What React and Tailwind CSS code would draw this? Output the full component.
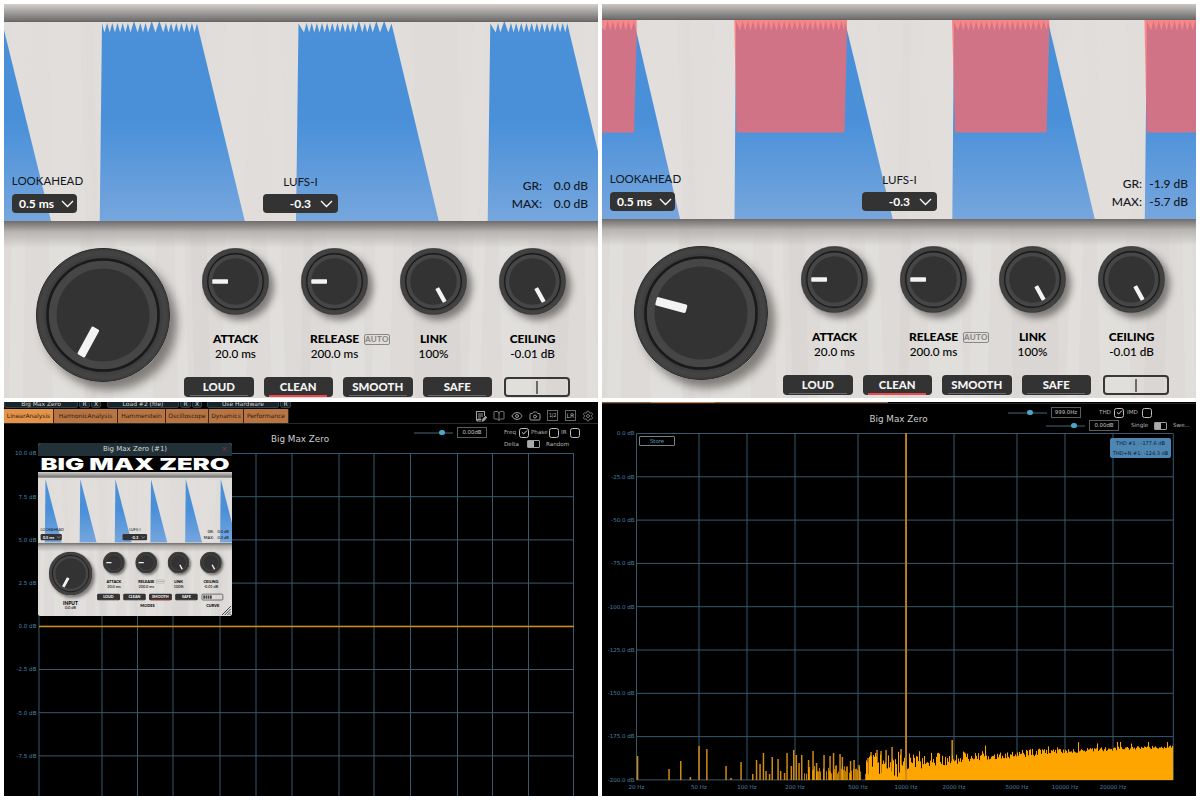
import React from 'react';
import { BookOpen, Eye, Camera, Settings, Check } from 'lucide-react';

// faint wood streaks, [x top, x bottom, width]
const STREAKS = [
  [8, 4, 14], [44, 50, 38], [76, 82, 12], [112, 108, 40], [170, 176, 10], [186, 192, 16],
  [222, 214, 26], [262, 270, 14], [300, 296, 9], [322, 330, 34], [372, 366, 18], [408, 412, 46],
  [470, 462, 12], [494, 500, 30], [548, 540, 20], [580, 584, 10],
];

// x positions of the notches cut in the top of each loud block
const run = (from, count, step = 5.2) => Array.from({ length: count }, (_, i) => from + i * step);

const LOUD_BLOCKS = [
  { left: 98, base: 95.7, right: 193, end: 241, notches: [...run(100.5, 6), 133.6, 139, 144, 151.4, ...run(159.3, 7)] },
  { left: 294.5, base: 292, right: 387.5, end: 435, notches: [...run(300, 11, 5.15), 358.3, 363.3, 368.7, 376, 384.3] },
  { left: 486.3, base: 483.7, right: 563.3, end: 611, notches: [491.7, 496.3, ...run(504.4, 12, 5.17)] },
];

const HOT_BLOCKS = [
  { left: -5, base: -5, right: 32, end: 78.3, notches: run(3, 6) },
  { left: 134, base: 132.5, right: 243, end: 291, notches: run(138, 21) },
  { left: 352, base: 350.3, right: 446, end: 493, notches: run(356, 18) },
  { left: 545, base: 542.8, right: 640, end: 690, notches: run(549, 10) },
];

const REDUCTION = [
  'M0 0H34.7V18L32 112.5H0Z',
  'M132.3 0H245V12L242.5 112.5H134.5Z',
  'M350 0H447.3V12L444.5 112.5H353Z',
  'M542.5 0H594V112.5H544.7Z',
];

const SPIKES = [23, 129.5, 237, 346, 452.5, 559.5];

const MODES = ['LOUD', 'CLEAN', 'SMOOTH', 'SAFE'];

function blockPath({ left, base, right, end, notches }) {
  let d = `M${base} 200L${left} 1.5`;
  notches.forEach((x, i) => {
    const next = i < notches.length - 1 ? notches[i + 1] : null;
    d += `L${x} 10.5`;
    if (next) d += `L${(x + next) / 2} ${next - x > 6 ? -1 : 1}`;
  });
  return `${d}L${right} 1.5L${end} 200Z`;
}

function Streaks({ height, opacity }) {
  return (
    <svg viewBox={`0 0 594 ${height}`} preserveAspectRatio="none" className="absolute inset-0 w-full h-full">
      {STREAKS.map(([a, b, w], i) => (
        <path
          key={i}
          d={`M${a} 0H${a + w}L${b + w} ${height}H${b}Z`}
          fill={i % 3 === 2 ? '#d5d0cd' : '#e8e6e2'}
          opacity={opacity}
        />
      ))}
    </svg>
  );
}

function Wave({ id, kind }) {
  return (
    <svg viewBox="0 0 594 199" className="absolute left-0 top-0 w-[594px] h-[199px]">
      <defs>
        <linearGradient id={id} x1="0" y1="0" x2="0" y2="199" gradientUnits="userSpaceOnUse">
          <stop offset="0" stopColor="#4a90d9" />
          <stop offset="0.5" stopColor="#4a90d9" />
          <stop offset="1" stopColor="#76a6dd" />
        </linearGradient>
      </defs>
      <g fill={`url(#${id})`}>
        {kind === 'loud' && <path d="M0 8L47 199H0Z" />}
        {kind === 'loud' && LOUD_BLOCKS.map((b) => <path key={b.left} d={blockPath(b)} />)}
        {kind === 'hot' && HOT_BLOCKS.map((b) => <path key={b.left} d={blockPath(b)} />)}
        {kind === 'idle' && SPIKES.map((x) => <path key={x} d={`M${x} 4L${x - 2} 199H${x + 50}Z`} />)}
      </g>
      {kind === 'hot' && <path d={REDUCTION.join('')} fill="#ff696a" fillOpacity="0.74" />}
    </svg>
  );
}

function Knob({ big, angle }) {
  return (
    <div
      className={
        big
          ? 'w-[134px] h-[134px] rounded-full shadow-[7px_8px_10px_rgba(50,45,42,0.55)]'
          : 'w-[67px] h-[67px] rounded-full shadow-[5px_5px_7px_rgba(50,45,42,0.55)]'
      }
    >
      <svg viewBox="0 0 134 134" className="block w-full h-full">
        <circle cx="67" cy="67" r="66.5" fill="#3e3e3e" stroke="#2b2b2b" />
        <circle cx="67" cy="67" r="62" fill="none" stroke="#434343" strokeWidth="5" />
        <circle cx="67" cy="67" r="55.5" fill="#464646" stroke="#1a1a1a" strokeWidth="2.6" />
        <circle cx="67" cy="67" r="46.5" fill="#333" />
        <rect x="62.7" y="82" width="8.6" height="31.5" rx="1.5" fill="#f3f3f3" transform={`rotate(${angle} 67 67)`} />
      </svg>
    </div>
  );
}

function Dial({ label, value, angle, auto }) {
  return (
    <div className="w-[99px] flex flex-col items-center text-black">
      <Knob angle={angle} />
      <div className="relative mt-[17px] text-[12px] leading-[14px] font-black tracking-[-0.1px] whitespace-nowrap">
        {label}
        {auto && (
          <span className="absolute left-[54px] top-[1.5px] h-[11px] w-[26px] rounded-[2px] border border-[#8b8987] text-center text-[8px] leading-[9px] font-black tracking-[0.3px] text-[#8b8987]">
            AUTO
          </span>
        )}
      </div>
      <div className="text-[11.7px] leading-[14px] font-medium whitespace-nowrap">{value}</div>
    </div>
  );
}

function Picker({ label, value, wide }) {
  return (
    <div className="flex flex-col items-center">
      <span className={wide ? 'mb-[5px] text-[11.6px] leading-[15px]' : 'mb-[6px] text-[11.5px] leading-[15px]'}>
        {label}
      </span>
      <div
        className={
          wide
            ? 'flex h-[19px] w-[75px] items-center justify-end rounded-[4px] bg-[#333] pr-[5px] text-[12px] font-bold text-white'
            : 'flex h-[19px] w-[65px] self-start items-center justify-end rounded-[4px] bg-[#333] pr-[3px] text-[12px] font-bold text-white'
        }
      >
        {value}
        <svg viewBox="0 0 13 8" className={wide ? 'ml-[9px] w-[13px] h-[8px]' : 'ml-[7px] w-[13px] h-[8px]'}>
          <path d="M1 1L6.5 6.5L12 1" fill="none" stroke="#fff" strokeWidth="1.3" />
        </svg>
      </div>
    </div>
  );
}

function Limiter({ id, kind, gr, max, inputAngle, mode, short, mini }) {
  return (
    <div className="relative w-[594px] h-[441px] flex flex-col bg-[#dddad7] font-['Lato',sans-serif]">
      <div
        className={
          short
            ? 'h-[16px] shrink-0 bg-gradient-to-b from-[#cac7c3] to-[#706e6d] border-b border-[#686665]'
            : 'h-[18px] shrink-0 bg-gradient-to-b from-[#d3d0cc] to-[#706e6d] border-b border-[#686665]'
        }
      />
      <div className="relative h-[199px] shrink-0 overflow-hidden bg-[#e0ddda]">
        <Streaks height={199} opacity={0.15} />
        <Wave id={id} kind={kind} />
        <div className="relative flex h-full items-end pb-[8px] pl-[8px] text-[#10161d]">
          <div className="w-[71px]">
            <Picker label="LOOKAHEAD" value="0.5 ms" />
          </div>
          <div className={short ? 'ml-[181px]' : 'ml-[180px]'}>
            <Picker label="LUFS-I" value="-0.3" wide />
          </div>
          <div
            className={
              short
                ? 'ml-auto mr-[8px] grid grid-cols-[auto_46px] text-right text-[12px] leading-[18px] font-medium'
                : 'ml-auto mr-[10px] grid grid-cols-[auto_46px] text-right text-[12px] leading-[18px] font-medium'
            }
          >
            <span>GR:</span>
            <span>{gr}</span>
            <span>MAX:</span>
            <span>{max}</span>
          </div>
        </div>
      </div>
      <div className="relative flex-1 overflow-hidden">
        <Streaks height={224} opacity={0.4} />
        <div className="relative h-[27px] bg-gradient-to-b from-[#6f6c6b] via-[#aaa7a4]/75 via-40% to-transparent" />
        <div className={mini || short ? 'relative flex pl-px' : 'relative flex'}>
          <div className={short ? 'w-[182px] flex flex-col pl-[31px]' : 'w-[182px] flex flex-col pl-[31.5px]'}>
            <Knob big angle={inputAngle} />
            <div className="w-[134px] pt-[15px] text-center text-black">
              <div className="text-[15px] leading-[17px] font-black">INPUT</div>
              <div className="text-[12px] leading-[14px] font-medium">0.0 dB</div>
            </div>
          </div>
          <div className="flex flex-col">
            <div className="flex">
              <Dial label="ATTACK" value="20.0 ms" angle={90} />
              <Dial label="RELEASE" value="200.0 ms" angle={90} auto />
              <Dial label="LINK" value="100%" angle={-29} />
              <Dial label="CEILING" value="-0.01 dB" angle={-29} />
            </div>
            <div className="-ml-[2px] mt-[17px] flex gap-[10px]">
              {MODES.map((m) => (
                <div key={m} className="flex h-[20px] w-[69.5px] flex-col items-center rounded-[4px] bg-[#333] pt-[2px]">
                  <span className="text-[11.4px] leading-[16px] font-black tracking-[0px] text-[#f4f4f4]">{m}</span>
                  <span className={m === mode ? 'h-[1.5px] w-[58px] bg-[#f0484c]' : 'h-px w-[58px] bg-[#6a6a6a]'} />
                </div>
              ))}
              <div className="ml-[2px] flex h-[20px] w-[66px] items-center justify-center rounded-[4px] border-2 border-[#383838]">
                {mini ? (
                  <div className="mr-auto ml-[3px] h-[10px] w-[26px] bg-[repeating-linear-gradient(90deg,#444_0px,#444_5px,#999_5px,#999_7px)]" />
                ) : (
                  <div className="h-[13px] w-[2px] bg-[#6c6a69]" />
                )}
              </div>
            </div>
            <div className="mt-[8px] flex text-[12px] leading-[16px] font-black text-black">
              <span className="w-[304px] text-center">MODES</span>
              <span className="w-[96px] text-center">CURVE</span>
            </div>
          </div>
        </div>
      </div>
    </div>
  );
}

function Box({ on }) {
  return (
    <span className="flex h-[10px] w-[10px] shrink-0 items-center justify-center rounded-[2.5px] border border-[#c0c0c0]">
      {on && <Check className="h-[7px] w-[7px] text-white" strokeWidth={3} />}
    </span>
  );
}

function Toggle() {
  return (
    <span className="flex h-[8px] w-[13px] shrink-0 rounded-[1px] border border-[#9a9a9a]">
      <span className="h-full w-[6px] bg-[#aaa]" />
    </span>
  );
}

function Slider({ at, value }) {
  return (
    <div className="flex items-center">
      <div className="flex h-[2px] w-[39px] items-center bg-[#24323a]">
        <span className="h-[5.5px] w-[5.5px] rounded-full bg-[#48a9cc]" style={{ marginLeft: at }} />
      </div>
      <span className="ml-[4px] h-[11px] w-[30px] border border-[#5c5c5c] text-center text-[5.4px] leading-[9px] text-[#c4c4c4]">{value}</span>
    </div>
  );
}

const TABS = [
  ['LinearAnalysis', 'w-[50px] bg-[#e4934a]'],
  ['HarmonicAnalysis', 'w-[64px] bg-[#b87544]'],
  ['Hammerstein', 'w-[48px] bg-[#b87544]'],
  ['Oscilloscope', 'w-[43px] bg-[#b87544]'],
  ['Dynamics', 'w-[35px] bg-[#b87544]'],
  ['Performance', 'w-[45px] bg-[#b87544]'],
];

const SLOTS = [
  ['Big Max Zero', 'w-[74px]'], ['R', 'w-[11px]'], ['X', 'w-[10px] mr-[5px]'],
  ['Load #2 (file)', 'w-[72px]'], ['R', 'w-[11px]'], ['X', 'w-[10px] mr-[4px]'],
  ['Use Hardware', 'w-[72px]'], ['R', 'w-[11px]'],
];

function GainChart() {
  const cols = [35, 98, 133.5, 169, 216, 252, 288, 335, 370, 406.5, 453.5, 488.5, 524.5, 569.5];
  const rows = ['10.0 dB', '7.5 dB', '5.0 dB', '2.5 dB', '0.0 dB', '-2.5 dB', '-5.0 dB', '-7.5 dB'];
  return (
    <svg viewBox="0 0 594 347" className="block w-[594px] h-[347px]">
      <g stroke="#38596f" strokeWidth="1">
        {cols.map((x) => <path key={x} d={`M${x} 4.5V347`} />)}
        {rows.map((r, i) => <path key={r} d={`M35 ${4.5 + i * 43.2}H570`} />)}
      </g>
      <path d="M35 177.5H570" stroke="#cf8a17" strokeWidth="1.6" />
      <g fill="#4a80a6" fontSize="5.6" textAnchor="end">
        {rows.map((r, i) => <text key={r} x="32.5" y={6.4 + i * 43.2}>{r}</text>)}
      </g>
    </svg>
  );
}

function LinearPanel() {
  return (
    <div className="relative h-[394px] w-[594px] overflow-hidden bg-black">
      <div className="flex h-[6px] items-end gap-px overflow-hidden">
        {SLOTS.map(([t, w], i) => (
          <span key={i} className={`${w} h-[9px] shrink-0 rounded-[2px] border border-[#31424b] bg-[#18242a] text-center text-[6px] leading-[7px] text-[#d5d5d5]`}>
            {t}
          </span>
        ))}
      </div>
      <div className="flex h-[16px] items-end border-b border-[#2a2a2a]">
        {TABS.map(([t, c]) => (
          <span key={t} className={`${c} h-[14px] shrink-0 border-r border-[#3b2615] text-center text-[6px] leading-[14px] text-[#2d1808]`}>{t}</span>
        ))}
        <div className="ml-auto mr-[4px] flex h-full items-center gap-[6px] text-[#a0a0a0]">
          <svg viewBox="0 0 24 24" className="h-[12px] w-[12px]" fill="none" stroke="currentColor" strokeWidth="2.2" strokeLinecap="round">
            <path d="M19 11V3H3V19A3 3 0 0 0 6 22H12M7 8H15M7 12H15M7 16H11M5 22V19H12" />
            <path d="M15 22L16 18L21 13L23 15L18.5 20.5Z" fill="currentColor" />
          </svg>
          <BookOpen className="h-[12px] w-[12px] text-[#777]" />
          <Eye className="h-[12px] w-[12px]" />
          <Camera className="h-[12px] w-[12px]" />
          <span className="h-[11px] w-[11px] border border-[#666] text-center text-[5px] leading-[9px] tracking-[-0.4px] whitespace-nowrap text-[#bbb]">1|2</span>
          <span className="ml-px h-[11px] w-[11px] border border-[#666] text-center text-[6.3px] leading-[9px] text-[#bbb]">LR</span>
          <Settings className="h-[12px] w-[12px] text-[#777]" />
        </div>
      </div>
      <div className="flex h-[25px]">
        <div className="w-[410px] pl-[187px] pt-[9px] text-[8.8px] leading-[12px] text-center pr-[5px] text-[#cfcfcf]">Big Max Zero</div>
        <div className="pt-[3px]"><Slider at={25} value="0.00dB" /></div>
        <div className="ml-[17px] pt-[3px] text-[5.6px] text-[#b5b5b5]">
          <div className="flex h-[11px] items-center whitespace-nowrap">
            <span className="w-[15px]">Freq</span><Box on />
            <span className="ml-[2px] w-[18px]">Phase</span><Box />
            <span className="ml-[2px] w-[9px]">IR</span><Box />
          </div>
          <div className="flex h-[12px] items-center">
            <span className="w-[23px]">Delta</span><Toggle /><span className="ml-[6px]">Random</span>
          </div>
        </div>
      </div>
      <GainChart />

      {/* floating plugin window */}
      <div className="absolute left-[34px] top-[41px] h-[173px] w-[194px] overflow-hidden rounded-[3px] bg-[#dddad7]">
        <div className="relative h-[13px] bg-[#223138] text-center text-[7px] leading-[13px] text-[#d4d7d9]">
          Big Max Zero (#1)
          <span className="absolute right-[5px] top-0 text-[7px] text-[#a32a33]">×</span>
        </div>
        <div className="h-[16px] bg-black">
          <svg viewBox="0 0 194 16" className="block h-[16px] w-[194px]">
            <text x="2.5" y="14" textLength="189" lengthAdjust="spacingAndGlyphs" fontFamily="Inter" fontWeight="900" fontSize="16.5" fill="#fff">BIG MAX ZERO</text>
          </svg>
        </div>
        <div className="h-[144px] overflow-hidden">
          <div className="origin-top-left scale-[0.3266]">
            <Limiter id="idle-fill" kind="idle" gr="0.0 dB" max="0.0 dB" inputAngle={29} mode="SMOOTH" mini />
          </div>
        </div>
        <svg viewBox="0 0 10 10" className="absolute bottom-[1px] right-[1px] h-[9px] w-[9px]">
          <path d="M0 10L10 0M3 10L10 3M6 10L10 6M8.5 10L10 8.5" stroke="#333" strokeWidth="1" />
        </svg>
      </div>
    </div>
  );
}

// noise floor, [x, height] from 20 Hz upwards
const SPARSE = [
  [35.5, 24], [67, 11], [78.7, 19], [88.3, 3], [97, 34], [104.8, 31], [124, 14], [129, 2], [139, 18],
  [150.7, 6], [154.5, 20], [158, 16], [161.4, 27], [164, 9], [167.5, 6], [170.2, 23], [176, 21],
  [178.6, 9], [182.5, 7], [185, 27], [189.3, 14], [191.7, 30], [194.3, 25], [197, 17], [199.7, 25],
  [206.5, 20], [211, 29], [214.5, 17], [222, 25], [228, 24], [231.5, 27], [238, 26], [240.3, 23],
  [248.5, 19], [252, 20], [257, 15], [266, 22], [269, 28], [275, 30], [279, 29], [284, 30], [290, 33], [299, 31],
];

function noise(i) {
  const v = Math.sin(i * 127.1 + 3.7) * 43758.5453;
  return v - Math.floor(v);
}

// low region is patchy, towards 1 kHz the bars merge into a solid floor
function noiseBars() {
  const bars = [];
  for (let x = 200; x < 571; x += 1) {
    const n = noise(x);
    let h;
    if (x < 264) {
      h = x > 218 && x < 221 ? 0 : n < 0.25 ? 0 : 3 + n * 12;
    } else {
      const t = (x - 264) / 307;
      const spread = 22 * Math.pow(1 - t, 2) + 3.5;
      const top = 28 + t * 7;
      h = top - spread * (0.1 + n * 0.9);
      if (noise(x + 900) > 0.92) h = Math.min(h + 6, 38);
      if (x < 320 && noise(x + 400) < 0.15) h *= 0.4;
    }
    if (h > 0) bars.push([x, h]);
  }
  return bars;
}

const FLOOR = noiseBars();

function SpectrumChart() {
  const cols = [
    [34.5, '20 Hz'], [97, '50 Hz'], [145, '100 Hz'], [193, '200 Hz'], [256, '500 Hz'], [304, '1000 Hz'],
    [352, '2000 Hz'], [415, '5000 Hz'], [463, '10000 Hz'], [511, '20000 Hz'], [571.3, ''],
  ];
  const rows = ['0.0 dB', '-25.0 dB', '-50.0 dB', '-75.0 dB', '-100.0 dB', '-125.0 dB', '-150.0 dB', '-175.0 dB', '-200.0 dB'];
  return (
    <svg viewBox="0 0 594 365" className="block h-[365px] w-[594px]">
      <g stroke="#38596f">
        {cols.map(([x]) => <path key={x} d={`M${x} 2.5V349`} />)}
        {rows.map((r, i) => <path key={r} d={`M34.5 ${2.5 + i * 43.3}H571`} />)}
      </g>
      <g fill="#d08a14">
        {SPARSE.map(([x, h]) => <rect key={x} x={x - 0.7} y={349 - h} width="1.5" height={h} />)}
      </g>
      <g fill="#ffa500">
        {FLOOR.map(([x, h]) => (
          <rect key={x} x={x} y={349 - h} width="1.05" height={h} fillOpacity={x < 264 ? 0.75 : 1} />
        ))}
        <rect x="349.5" y="309" width="1.3" height="40" />
      </g>
      <rect x="303.2" y="2" width="1.7" height="347" fill="#d08a1c" />
      <g fill="#4a80a6" fontSize="5.5">
        {rows.map((r, i) => <text key={r} x="32.5" y={4.3 + i * 43.3} textAnchor="end">{r}</text>)}
        {cols.map(([x, t]) => <text key={x} x={x} y="357.5" textAnchor="middle">{t}</text>)}
      </g>
    </svg>
  );
}

function HarmonicPanel() {
  return (
    <div className="relative h-[394px] w-[594px] overflow-hidden bg-black">
      <div className="flex h-[2px] border-b border-[#222]">
        <span className="w-[49px] bg-[#8f5c36]" />
        <span className="w-[64px] bg-[#c9803c]" />
        <span className="w-[173px] bg-[#8f5c36]" />
      </div>
      <div className="flex h-[27px]">
        <div className="w-[406px] pl-[187px] pt-[9px] text-center text-[8.8px] leading-[12px] text-[#cfcfcf]">Big Max Zero</div>
        <div className="flex-1 pt-[2px] text-[5.6px] text-[#b5b5b5]">
          <div className="flex h-[13px] items-center">
            <Slider at={19} value="999.0Hz" />
            <span className="ml-[18px] w-[15px]">THD</span><Box on />
            <span className="ml-[3px] w-[15px]">IMD</span><Box />
          </div>
          <div className="flex h-[13px] items-center pl-[38px]">
            <Slider at={25} value="0.00dB" />
            <span className="ml-[12px] w-[23px]">Single</span><Toggle /><span className="ml-[6px]">Swe...</span>
          </div>
        </div>
      </div>
      <SpectrumChart />
      <div className="absolute left-[37px] top-[34px] h-[10px] w-[36px] rounded-[1px] border border-[#7d7d7d] bg-black text-center text-[5.4px] leading-[8px] text-[#5c9cc4]">
        Store
      </div>
      <div className="absolute left-[508px] top-[36px] h-[20px] w-[61px] rounded-[2px] bg-[#4e86b3] pt-[1px] text-center text-[5px] leading-[9.5px] whitespace-nowrap text-[#0b1c2c]">
        <div>THD #1 : -177.6 dB</div>
        <div>THD+N #1: -124.3 dB</div>
      </div>
    </div>
  );
}

export default function App() {
  return (
    <div className="grid h-[800px] w-[1200px] grid-cols-[594px_594px] grid-rows-[394px_394px] gap-[4px] overflow-hidden bg-white p-[4px] font-['DejaVu_Sans',sans-serif]">
      <div className="overflow-hidden">
        <Limiter id="loud-fill" kind="loud" gr="0.0 dB" max="0.0 dB" inputAngle={28.5} mode="CLEAN" />
      </div>
      <div className="overflow-hidden">
        <Limiter id="hot-fill" kind="hot" gr="-1.9 dB" max="-5.7 dB" inputAngle={105} mode="CLEAN" short />
      </div>
      <LinearPanel />
      <HarmonicPanel />
    </div>
  );
}
